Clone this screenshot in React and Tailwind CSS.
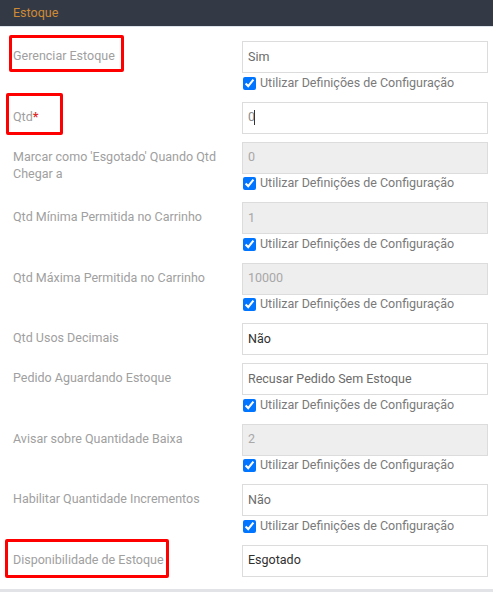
import React from "react";

const rows = [
  { label: "Gerenciar Estoque", value: "Sim", tone: "mid", check: true },
  { label: "Qtd", value: "0", tone: "caret", check: false, required: true },
  { label: "Marcar como 'Esgotado' Quando Qtd Chegar a", value: "0", tone: "disabled", check: true },
  { label: "Qtd Mínima Permitida no Carrinho", value: "1", tone: "disabled", check: true },
  { label: "Qtd Máxima Permitida no Carrinho", value: "10000", tone: "disabled", check: true },
  { label: "Qtd Usos Decimais", value: "Não", tone: "dark", check: false },
  { label: "Pedido Aguardando Estoque", value: "Recusar Pedido Sem Estoque", tone: "mid", check: true },
  { label: "Avisar sobre Quantidade Baixa", value: "2", tone: "disabled", check: true },
  { label: "Habilitar Quantidade Incrementos", value: "Não", tone: "mid", check: true },
  { label: "Disponibilidade de Estoque", value: "Esgotado", tone: "dark", check: false },
];

function Control({ value, tone }) {
  const base =
    "h-[32px] w-full border border-[#dcdcdc] flex items-center pl-[5px] text-[12.5px]";
  if (tone === "disabled") {
    return <div className={`${base} bg-[#eeeeee] text-[#a8a8a8]`}>{value}</div>;
  }
  if (tone === "dark") {
    return <div className={`${base} bg-white text-[#303030]`}>{value}</div>;
  }
  if (tone === "caret") {
    return (
      <div className={`${base} bg-white text-[#8a8a8a]`}>
        {value}
        <span className="inline-block w-px h-[15px] bg-[#333] ml-[-1px]" />
      </div>
    );
  }
  return <div className={`${base} bg-white text-[#6b6b6b]`}>{value}</div>;
}

function Row({ row }) {
  return (
    <div className="flex">
      <div className="w-[242px] pl-[13px] pr-[12px] pt-[6px] text-[12.5px] leading-[17px] text-[#a0a0a0]">
        {row.label}
        {row.required && <span className="text-[#e02b27] font-bold">*</span>}
      </div>
      <div className="w-[246px] flex flex-col">
        <Control value={row.value} tone={row.tone} />
        {row.check && (
          <div className="h-[20.5px] flex items-center pl-[1px]">
            <input
              type="checkbox"
              defaultChecked
              className="m-0 w-[13px] h-[13px] accent-[#0075ff]"
            />
            <span className="ml-[4px] text-[12.5px] text-[#7a7a7a]">
              Utilizar Definições de Configuração
            </span>
          </div>
        )}
      </div>
    </div>
  );
}

export default function App() {
  return (
    <div
      className="w-[494px] h-[592px] bg-white relative"
      style={{ fontFamily: "Roboto, 'Liberation Sans', sans-serif" }}
    >
      <div className="w-[493px] h-[26px] bg-[#333a46] flex items-center pl-[13px] text-[12.5px] text-[#d08a34]">
        Estoque
      </div>
      <div className="w-[493px] h-px bg-[#dde3ea]" />
      <div className="w-[493px] pt-[14px] pb-[12px] flex flex-col gap-[8px]">
        {rows.map((r) => (
          <Row key={r.label} row={r} />
        ))}
      </div>
      <div className="w-[493px] h-[4px] bg-[#e1e3e7]" />

      {/* annotation boxes */}
      <div className="absolute left-[9px] top-[35px] w-[115px] h-[37px] border-[3px] border-[#ff0000] rounded-[2px]" />
      <div className="absolute left-[6px] top-[93px] w-[57px] h-[42px] border-[3px] border-[#ff0000] rounded-[2px]" />
      <div className="absolute left-[5px] top-[539px] w-[164px] h-[39px] border-[3px] border-[#ff0000] rounded-[2px]" />
    </div>
  );
}
